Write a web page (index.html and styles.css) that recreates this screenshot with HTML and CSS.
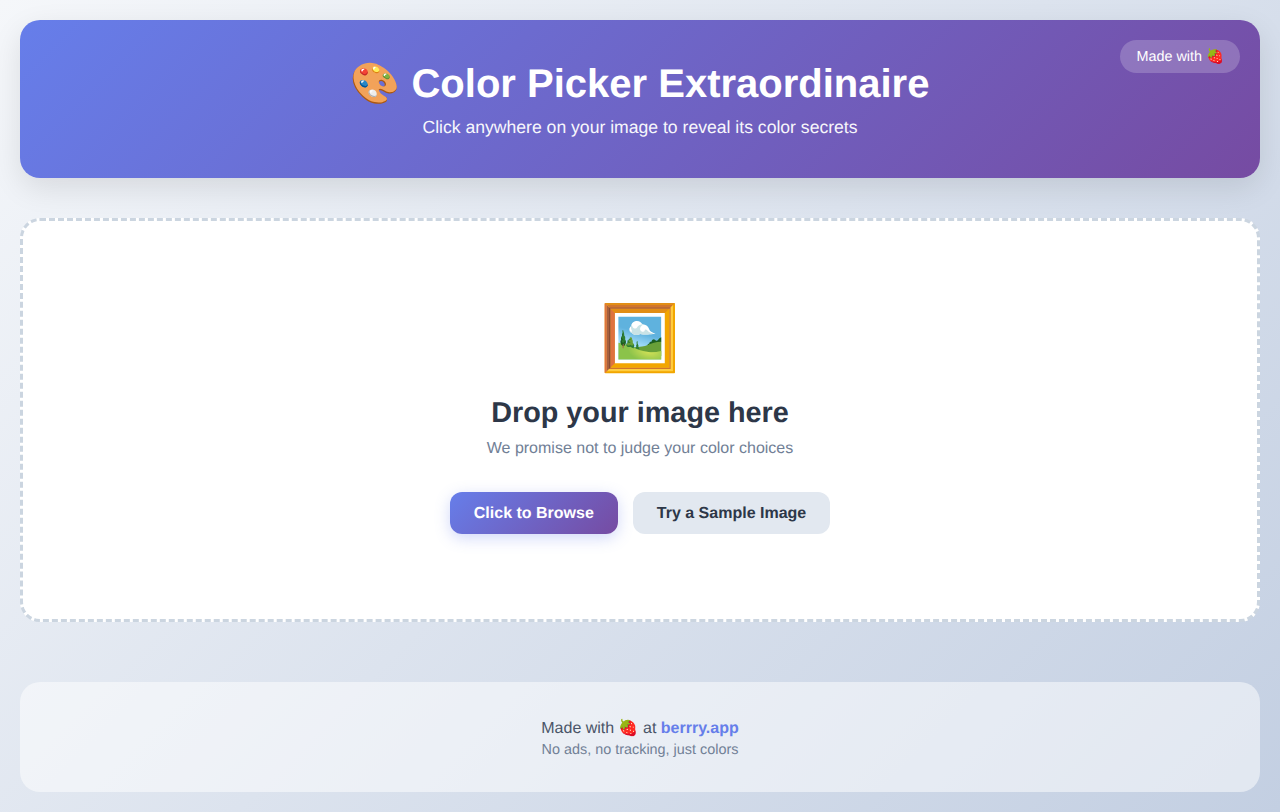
FILE: index.html
```html
<!DOCTYPE html>
<html lang="en">
<head>
    <meta charset="UTF-8">
    <meta name="viewport" content="width=device-width, initial-scale=1.0">
    <title>Color Picker Extraordinaire</title>
    <link rel="stylesheet" href="styles.css">
</head>
<body>
    <!-- Header -->
    <header class="header">
        <div class="badge">Made with 🍓</div>
        <h1>🎨 Color Picker Extraordinaire</h1>
        <p>Click anywhere on your image to reveal its color secrets</p>
    </header>

    <!-- Upload area -->
    <section class="drop-zone">
        <div class="drop-icon">🖼️</div>
        <h2>Drop your image here</h2>
        <p>We promise not to judge your color choices</p>
        <div class="buttons">
            <button class="btn btn-primary">Click to Browse</button>
            <button class="btn btn-secondary">Try a Sample Image</button>
        </div>
    </section>

    <!-- Footer -->
    <footer class="footer">
        <p class="footer-main">Made with 🍓 at <a href="#">berrry.app</a></p>
        <p class="footer-sub">No ads, no tracking, just colors</p>
    </footer>
</body>
</html>
```

FILE: styles.css
```css
* {
    margin: 0;
    padding: 0;
    box-sizing: border-box;
}

body {
    font-family: "Liberation Sans", Arial, sans-serif;
    text-rendering: geometricPrecision;
    background: linear-gradient(135deg, #f5f7fa 0%, #c3cfe2 100%);
    min-height: 812px;
    padding: 20px;
    color: #2d3748;
}

.header {
    position: relative;
    background: linear-gradient(135deg, #667eea 0%, #764ba2 100%);
    color: #fff;
    text-align: center;
    padding: 40px 20px;
    border-radius: 20px;
    box-shadow: 0 10px 30px rgba(0, 0, 0, 0.1);
    margin-bottom: 40px;
}

.header h1 {
    font-size: 40px;
    font-weight: 700;
    margin-bottom: 10px;
}

.header p {
    font-size: 17.6px;
    opacity: 0.95;
}

.badge {
    position: absolute;
    top: 20px;
    right: 20px;
    background: rgba(255, 255, 255, 0.2);
    padding: 8px 16px;
    border-radius: 20px;
    font-size: 14.4px;
}

.drop-zone {
    background: #fff;
    border: 3px dashed #cbd5e0;
    border-radius: 20px;
    padding: 80px 40px;
    text-align: center;
    margin-bottom: 60px;
}

.drop-icon {
    font-size: 64px;
    margin-bottom: 21px;
}

.drop-zone h2 {
    font-size: 28.8px;
    margin-bottom: 10px;
}

.drop-zone p {
    font-size: 16px;
    color: #718096;
    margin-bottom: 29px;
}

.buttons {
    display: flex;
    justify-content: center;
    gap: 15px;
    padding: 5px 0;
}

.btn {
    font-family: inherit;
    text-rendering: inherit;
    font-size: 16px;
    font-weight: 700;
    padding: 13px 24px 11px;
    border: none;
    border-radius: 12px;
    cursor: pointer;
}

.btn-primary {
    background: linear-gradient(135deg, #667eea 0%, #764ba2 100%);
    color: #fff;
    box-shadow: 0 4px 15px rgba(102, 126, 234, 0.3);
}

.btn-secondary {
    background: #e2e8f0;
    color: #2d3748;
}

.footer {
    background: rgba(255, 255, 255, 0.5);
    border-radius: 20px;
    padding: 36px 30px 34px;
    text-align: center;
}

.footer-main {
    color: #4a5568;
    font-size: 16px;
}

.footer-main a {
    color: #667eea;
    font-weight: 700;
    text-decoration: none;
}

.footer-sub {
    color: #718096;
    font-size: 14.4px;
    margin-top: 4px;
}
```
